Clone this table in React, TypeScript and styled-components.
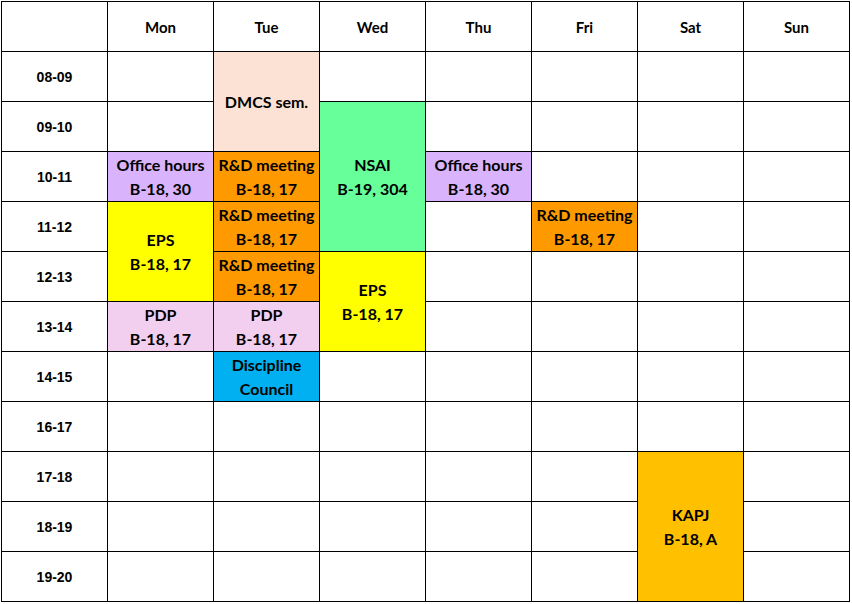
import React from "react";
import styled, { createGlobalStyle } from "styled-components";

const GlobalStyle = createGlobalStyle`
  html, body {
    margin: 0;
    padding: 0;
    background: #ffffff;
  }
`;

const days = ["Mon", "Tue", "Wed", "Thu", "Fri", "Sat", "Sun"];
const hours = [
  "08-09",
  "09-10",
  "10-11",
  "11-12",
  "12-13",
  "13-14",
  "14-15",
  "16-17",
  "17-18",
  "18-19",
  "19-20",
];

type Slot = {
  day: number;
  start: number;
  span: number;
  lines: string[];
  color: string;
};

const colors = {
  peach: "#fbe2d5",
  lavender: "#d9b3fb",
  orange: "#ff9900",
  yellow: "#ffff00",
  pink: "#f2ceef",
  green: "#66ff99",
  blue: "#00b0f0",
  amber: "#ffc000",
};

const slots: Slot[] = [
  { day: 0, start: 2, span: 1, lines: ["Office hours", "B-18, 30"], color: colors.lavender },
  { day: 0, start: 3, span: 2, lines: ["EPS", "B-18, 17"], color: colors.yellow },
  { day: 0, start: 5, span: 1, lines: ["PDP", "B-18, 17"], color: colors.pink },
  { day: 1, start: 0, span: 2, lines: ["DMCS sem."], color: colors.peach },
  { day: 1, start: 2, span: 1, lines: ["R&D meeting", "B-18, 17"], color: colors.orange },
  { day: 1, start: 3, span: 1, lines: ["R&D meeting", "B-18, 17"], color: colors.orange },
  { day: 1, start: 4, span: 1, lines: ["R&D meeting", "B-18, 17"], color: colors.orange },
  { day: 1, start: 5, span: 1, lines: ["PDP", "B-18, 17"], color: colors.pink },
  { day: 1, start: 6, span: 1, lines: ["Discipline", "Council"], color: colors.blue },
  { day: 2, start: 1, span: 3, lines: ["NSAI", "B-19, 304"], color: colors.green },
  { day: 2, start: 4, span: 2, lines: ["EPS", "B-18, 17"], color: colors.yellow },
  { day: 3, start: 2, span: 1, lines: ["Office hours", "B-18, 30"], color: colors.lavender },
  { day: 4, start: 3, span: 1, lines: ["R&D meeting", "B-18, 17"], color: colors.orange },
  { day: 5, start: 8, span: 3, lines: ["KAPJ", "B-18, A"], color: colors.amber },
];

export default function App() {
  const renderCells = (row: number) =>
    days.map((_, day) => {
      const slot = slots.find((s) => s.day === day && s.start === row);
      if (slot) {
        return (
          <EventCell key={day} rowSpan={slot.span} $bg={slot.color}>
            {slot.lines.map((line) => (
              <Line key={line}>{line}</Line>
            ))}
          </EventCell>
        );
      }
      const covered = slots.some(
        (s) => s.day === day && row > s.start && row < s.start + s.span
      );
      if (covered) return null;
      return <EmptyCell key={day} />;
    });

  return (
    <>
      <GlobalStyle />
      <Page>
        <Table>
          <colgroup>
            <col style={{ width: 106 }} />
            {days.map((d) => (
              <col key={d} style={{ width: 106 }} />
            ))}
          </colgroup>
          <thead>
            <tr>
              <Corner />
              {days.map((d) => (
                <DayHead key={d}>{d}</DayHead>
              ))}
            </tr>
          </thead>
          <tbody>
            {hours.map((h, row) => (
              <tr key={h}>
                <TimeCell>{h}</TimeCell>
                {renderCells(row)}
              </tr>
            ))}
          </tbody>
        </Table>
      </Page>
    </>
  );
}

const Page = styled.div`
  padding: 1px 0 0 1px;
`;

const Table = styled.table`
  border-collapse: collapse;
  table-layout: fixed;
  width: 849px;
  font-family: Lato, "Open Sans", sans-serif;
  font-weight: 700;
  color: #000000;

  tr {
    height: 50px;
  }

  th,
  td {
    border: 1px solid #000000;
    padding: 0;
    text-align: center;
    vertical-align: middle;
  }
`;

const Corner = styled.th``;

const DayHead = styled.th`
  font-size: 15px;
  font-weight: 700;
`;

const TimeCell = styled.td`
  font-family: "Liberation Sans", Arial, sans-serif;
  font-size: 14px;
  font-weight: 700;
`;

const EmptyCell = styled.td`
  background: #ffffff;
`;

const EventCell = styled.td<{ $bg: string }>`
  background: ${(p) => p.$bg};
  font-size: 16px;
`;

const Line = styled.div`
  line-height: 24px;
  white-space: nowrap;
`;
